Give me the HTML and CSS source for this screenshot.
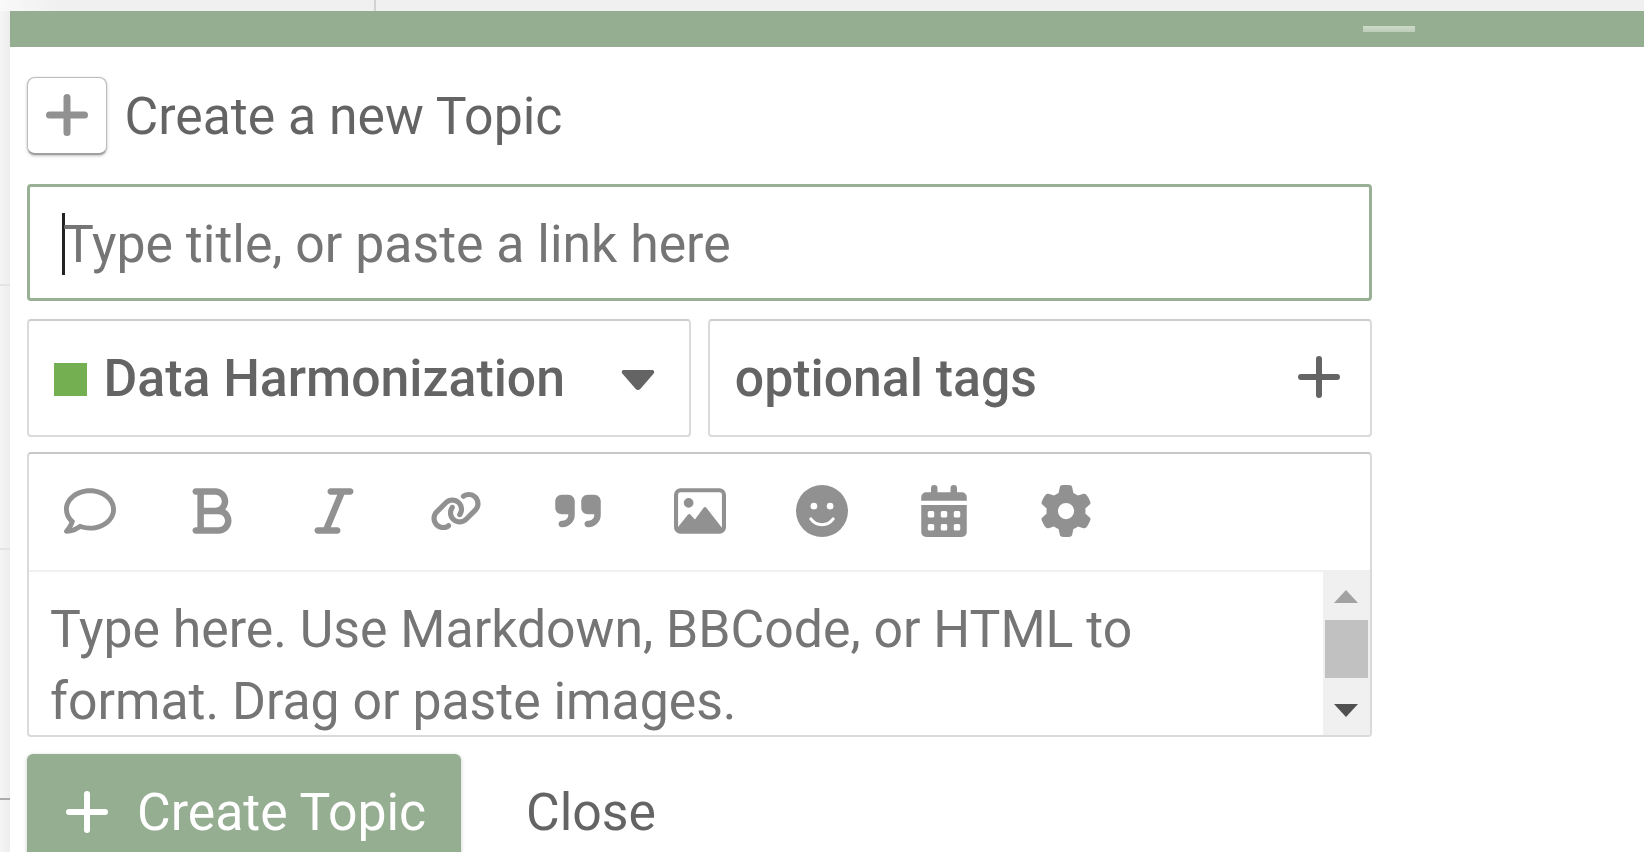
FILE: index.html
```html
<!DOCTYPE html>
<html lang="en">
<head>
<meta charset="utf-8">
<title>Create a new Topic</title>
<link rel="stylesheet" href="styles.css">
</head>
<body>
<div class="backdrop">
  <div class="page-top"></div>
  <div class="page-side"><i class="rule faint"></i><i class="rule faint"></i><i class="rule strong"></i></div>
  <main class="composer">
    <div class="grippie"><span class="grip"></span></div>
    <div class="content">
      <header class="action">
        <button class="action-button" aria-label="Topic actions"><svg class="plus" viewBox="0 0 42 42"><path d="M21 3.5v35M3.5 21h35"/></svg></button>
        <span class="action-title">Create a new Topic</span>
      </header>
      <div class="title-input"><span class="cursor"></span><span class="title-text">Type title, or paste a link here</span></div>
      <div class="selectors">
        <div class="select category"><span class="swatch"></span><span class="label">Data Harmonization</span><svg class="caret" viewBox="0 0 34 22"><path d="M3 1h28c2 0 3 2 1.500 3.700L19.500 19.700c-1.500 1.700-3.500 1.700-5 0L1.500 4.700C0 3 1 1 3 1z"/></svg></div>
        <div class="select tags"><span class="label">optional tags</span><svg class="plus slim" viewBox="0 0 42 42"><path d="M21 3v36M3 21h36"/></svg></div>
      </div>
      <section class="editor">
        <div class="toolbar">
          <svg class="icon" viewBox="0 0 512 512"><path d="M256 32C114.600 32 0 125.100 0 240c0 47.600 19.900 91.200 52.900 126.300C38 405.700 7 439.100 6.500 439.500c-6.600 7-8.400 17.200-4.600 26S14.400 480 24 480c61.500 0 110-25.700 139.100-46.300C192 442.800 223.200 448 256 448c141.400 0 256-93.100 256-208S397.400 32 256 32zm0 368c-26.700 0-53.100-4.100-78.400-12.100l-22.700-7.200-19.500 13.800c-14.300 10.100-33.900 21.400-57.500 29 7.300-12.100 14.400-25.700 19.900-40.200l10.600-28.100-20.600-21.800C69.700 314.100 48 282.200 48 240c0-88.200 93.300-160 208-160s208 71.800 208 160-93.300 160-208 160z"/></svg>
          <svg class="icon" viewBox="0 0 384 512"><path d="M0 64C0 46.300 14.300 32 32 32H80 96 224c70.700 0 128 57.300 128 128c0 31.300-11.300 60.100-30 82.300c37.100 22.400 62 63.100 62 109.700c0 70.700-57.300 128-128 128H96 80 32c-17.700 0-32-14.300-32-32s14.300-32 32-32H48V256 96H32C14.300 96 0 81.700 0 64zM224 224c35.300 0 64-28.700 64-64s-28.700-64-64-64H112V224H224zM112 288V416H256c35.300 0 64-28.700 64-64s-28.700-64-64-64H224 112z"/></svg>
          <svg class="icon" viewBox="0 0 384 512"><path d="M128 64c0-17.700 14.300-32 32-32H352c17.700 0 32 14.300 32 32s-14.300 32-32 32H293.300L160 416h64c17.700 0 32 14.300 32 32s-14.300 32-32 32H32c-17.700 0-32-14.300-32-32s14.300-32 32-32H90.700L224 96H160c-17.700 0-32-14.300-32-32z"/></svg>
          <svg class="icon" viewBox="0 0 640 512"><path d="M579.800 267.700c56.500-56.500 56.500-148 0-204.500c-50-50-128.800-56.500-186.300-15.400l-1.600 1.100c-14.400 10.300-17.700 30.300-7.400 44.600s30.300 17.700 44.600 7.400l1.600-1.100c32.100-22.900 76-19.300 103.800 8.600c31.500 31.500 31.500 82.500 0 114L422.300 334.800c-31.500 31.500-82.500 31.500-114 0c-27.900-27.900-31.500-71.800-8.600-103.800l1.100-1.600c10.300-14.400 6.900-34.400-7.400-44.600s-34.400-6.900-44.600 7.400l-1.100 1.600C206.500 251.200 213 330 263 380c56.500 56.500 148 56.500 204.500 0L579.800 267.700zM60.200 244.300c-56.500 56.500-56.500 148 0 204.500c50 50 128.800 56.500 186.300 15.400l1.600-1.100c14.400-10.300 17.700-30.300 7.400-44.600s-30.300-17.700-44.600-7.400l-1.600 1.100c-32.100 22.900-76 19.300-103.800-8.600C74 372 74 321 105.500 289.500L217.700 177.200c31.500-31.500 82.500-31.500 114 0c27.900 27.900 31.500 71.800 8.600 103.900l-1.100 1.600c-10.300 14.400-6.900 34.400 7.400 44.600s34.400 6.900 44.600-7.400l1.100-1.600C433.500 260.800 427 182 377 132c-56.500-56.500-148-56.500-204.500 0L60.200 244.300z"/></svg>
          <svg class="icon" viewBox="0 0 448 512"><path d="M448 296c0 66.300-53.700 120-120 120h-8c-17.700 0-32-14.300-32-32s14.300-32 32-32h8c30.900 0 56-25.100 56-56v-8H320c-35.300 0-64-28.700-64-64V160c0-35.300 28.700-64 64-64h64c35.300 0 64 28.700 64 64v136zm-256 0c0 66.300-53.700 120-120 120H64c-17.700 0-32-14.300-32-32s14.300-32 32-32h8c30.900 0 56-25.100 56-56v-8H64c-35.300 0-64-28.700-64-64V160c0-35.300 28.700-64 64-64h64c35.300 0 64 28.700 64 64v136z"/></svg>
          <svg class="icon" viewBox="0 0 512 512"><path fill-rule="evenodd" d="M64 32h384a64 64 0 0 1 64 64v320a64 64 0 0 1-64 64H64a64 64 0 0 1-64-64V96a64 64 0 0 1 64-64zm0 40a24 24 0 0 0-24 24v318L136 294c8-10 20-10 28 0l42 46 84-114c8-11 22-11 30 0l152 196V96a24 24 0 0 0-24-24zM144 128a48 48 0 1 1 0 96 48 48 0 0 1 0-96z"/></svg>
          <svg class="icon" viewBox="0 0 512 512"><circle cx="256" cy="256" r="256"/><circle class="cut" cx="176" cy="208" r="33"/><circle class="cut" cx="336" cy="208" r="33"/><path class="smile" d="M146 334c56 76 164 76 220 0"/></svg>
          <svg class="icon" viewBox="0 0 448 512"><path fill-rule="evenodd" d="M96 32a32 32 0 0 1 64 0v40h128V32a32 32 0 0 1 64 0v40h48a48 48 0 0 1 48 48v36H0v-36a48 48 0 0 1 48-48h48zM0 196h448v268a48 48 0 0 1-48 48H48a48 48 0 0 1-48-48zM80 256a16 16 0 0 0-16 16v32a16 16 0 0 0 16 16h32a16 16 0 0 0 16-16v-32a16 16 0 0 0-16-16zM208 256a16 16 0 0 0-16 16v32a16 16 0 0 0 16 16h32a16 16 0 0 0 16-16v-32a16 16 0 0 0-16-16zM336 256a16 16 0 0 0-16 16v32a16 16 0 0 0 16 16h32a16 16 0 0 0 16-16v-32a16 16 0 0 0-16-16zM80 384a16 16 0 0 0-16 16v32a16 16 0 0 0 16 16h32a16 16 0 0 0 16-16v-32a16 16 0 0 0-16-16zM208 384a16 16 0 0 0-16 16v32a16 16 0 0 0 16 16h32a16 16 0 0 0 16-16v-32a16 16 0 0 0-16-16zM336 384a16 16 0 0 0-16 16v32a16 16 0 0 0 16 16h32a16 16 0 0 0 16-16v-32a16 16 0 0 0-16-16z"/></svg>
          <svg class="icon" viewBox="0 0 512 512"><path d="M495.900 166.600c3.200 8.700 .5 18.400-6.400 24.600l-43.300 39.400c1.100 8.300 1.700 16.800 1.700 25.400s-.6 17.100-1.700 25.400l43.300 39.400c6.900 6.200 9.600 15.900 6.400 24.600c-4.400 11.900-9.700 23.300-15.800 34.300l-4.700 8.100c-6.600 11-14 21.400-22.100 31.200c-5.900 7.200-15.700 9.600-24.500 6.800l-55.700-17.700c-13.400 10.300-28.200 18.900-44 25.400l-12.500 57.100c-2 9.100-9 16.300-18.200 17.800c-13.800 2.300-28 3.500-42.500 3.500s-28.700-1.200-42.500-3.500c-9.200-1.500-16.200-8.700-18.200-17.800l-12.500-57.100c-15.800-6.500-30.600-15.100-44-25.400L83.100 425.900c-8.800 2.800-18.600 .3-24.500-6.800c-8.100-9.800-15.500-20.200-22.100-31.200l-4.700-8.100c-6.100-11-11.400-22.400-15.800-34.300c-3.200-8.700-.5-18.400 6.400-24.600l43.300-39.400C64.600 273.100 64 264.600 64 256s.6-17.100 1.700-25.400L22.400 191.200c-6.900-6.200-9.600-15.900-6.400-24.600c4.400-11.900 9.700-23.300 15.800-34.300l4.700-8.100c6.600-11 14-21.400 22.100-31.200c5.900-7.200 15.700-9.600 24.500-6.800l55.700 17.700c13.400-10.300 28.200-18.900 44-25.400l12.500-57.100c2-9.100 9-16.300 18.200-17.800C227.300 1.200 241.500 0 256 0s28.700 1.200 42.500 3.500c9.200 1.500 16.200 8.700 18.200 17.800l12.500 57.100c15.800 6.500 30.600 15.100 44 25.400l55.700-17.700c8.800-2.800 18.600-.3 24.500 6.800c8.100 9.800 15.500 20.200 22.100 31.200l4.700 8.100c6.100 11 11.400 22.400 15.800 34.300zM256 336a80 80 0 1 0 0-160 80 80 0 1 0 0 160z"/></svg>
        </div>
        <div class="textarea">
          <p class="placeholder">Type here. Use Markdown, BBCode, or HTML to<br>format. Drag or paste images.</p>
          <div class="scrollbar">
            <svg class="arrow up" viewBox="0 0 24 13"><path d="M0 13L12 0l12 13z"/></svg>
            <span class="thumb"></span>
            <svg class="arrow down" viewBox="0 0 24 13"><path d="M0 0h24L12 13z"/></svg>
          </div>
        </div>
      </section>
      <footer class="submit">
        <button class="create"><svg class="plus slim" viewBox="0 0 42 42"><path d="M21 3v36M3 21h36"/></svg><span class="label">Create Topic</span></button>
        <a class="close">Close</a>
      </footer>
    </div>
  </main>
</div>
</body>
</html>
```
FILE: styles.css
```css
* { box-sizing: border-box; }
body {
  margin: 0;
  overflow: hidden;
  font-family: Roboto, "Liberation Sans", sans-serif;
  font-size: 51.750px;
  line-height: 72px;
  color: #646464;
}
button { font: inherit; border: 0; padding: 0; }
.backdrop {
  display: grid;
  grid-template: 10.500px 1fr / 9.600px 1fr;
  width: 1644px;
  height: 852px;
  overflow: hidden;
  background: #f0f0f0;
}
.page-top {
  grid-column: 1 / 3;
  width: 376px;
  border-right: 2px solid #d2d2d2;
  background: linear-gradient(90deg, #f9f9f9, #f0f0f0 60px);
}
.page-side {
  display: flex;
  flex-direction: column;
  background: linear-gradient(90deg, #f5f5f5, #ededed);
}
.rule { height: 2px; flex: none; }
.faint { background: #e4e4e4; margin-top: 273px; }
.faint + .faint { margin-top: 262px; }
.strong { background: #aaa; margin-top: 248px; }
.composer { background: #fff; min-width: 0; }
.grippie {
  display: flex;
  height: 36px;
  padding: 15.500px 0 0 1353.500px;
  background: #95ad90;
}
.grip { width: 52px; height: 6px; flex: none; background: linear-gradient(#cddaca, #bdcdb9); }
.content { width: 1362px; padding: 30.500px 0 0 17.400px; }
.action { display: flex; align-items: center; height: 77px; gap: 17.500px; }
.action-button {
  display: grid;
  place-items: center;
  width: 80px;
  height: 78px;
  border: 1px solid #bcbcbc;
  border-bottom: 2px solid #a0a0a0;
  border-radius: 8px;
  background: #fff;
  color: #919191;
  box-shadow: 0 1px 3px rgba(0, 0, 0, .25);
}
.plus { width: 42px; height: 42px; fill: none; stroke: currentColor; stroke-width: 7; stroke-linecap: round; }
.slim { stroke-width: 6; }
.action-title { padding-top: 3px; }
.title-input {
  display: flex;
  align-items: center;
  height: 117px;
  margin-top: 30px;
  padding: 2px 0 0 32px;
  border: 3px solid #98b093;
  border-radius: 4px;
  color: #757575;
}
.cursor { width: 3px; height: 62px; background: #222; }
.title-text { margin-left: -2px; padding-top: 2px; }
.label { padding-top: 2px; }
.selectors { display: grid; grid-template-columns: 1fr 1fr; gap: 17px; margin-top: 17.500px; }
.select {
  display: flex;
  align-items: center;
  height: 118px;
  border: 2px solid #dadada;
  border-top-color: #ccc;
  border-radius: 4px;
  font-weight: 500;
}
.category { padding: 0 34px 0 25px; }
.swatch { width: 33px; height: 33px; margin: 3px 16.500px 0 0; background: #74b051; }
.caret { width: 34px; height: 22px; margin: 4px 0 0 auto; fill: currentColor; }
.tags { justify-content: space-between; padding: 0 30px 0 25px; }
.tags .plus { margin-top: -2px; }
.editor {
  height: 285px;
  margin-top: 15.200px;
  border: 2px solid #dadada;
  border-top-color: #c8c8c8;
  border-radius: 4px;
  display: flex;
  flex-direction: column;
}
.toolbar {
  display: flex;
  gap: 70px;
  padding: 31px 35px 0;
  height: 118px;
  flex: none;
  border-bottom: 2px solid #f0f0f0;
}
.icon { width: 52px; height: 52px; fill: #919191; flex: none; }
.icon .cut { fill: #fff; }
.icon .smile { fill: none; stroke: #fff; stroke-width: 30; stroke-linecap: round; }
.textarea { display: flex; justify-content: space-between; flex: 1; min-height: 0; }
.placeholder { margin: 0; padding: 22px 0 0 21px; color: #757575; white-space: nowrap; }
.scrollbar {
  display: flex;
  flex-direction: column;
  align-items: center;
  width: 47px;
  padding: 18px 0 18px;
  background: #f0f0f0;
}
.arrow { width: 24px; height: 13px; flex: none; }
.up { fill: #a2a2a2; }
.down { fill: #505050; margin-top: auto; }
.thumb { width: 43px; height: 58px; margin-top: 17px; background: #c1c1c1; }
.submit { display: flex; height: 99px; margin-top: 17.500px; }
.create {
  display: flex;
  align-items: center;
  width: 434px;
  height: 116px;
  padding-left: 39px;
  gap: 29px;
  border-radius: 6px;
  background: #95ad90;
  color: #fff;
  box-shadow: 0 1px 4px rgba(0, 0, 0, .2);
}
.close { padding: 23px 0 0 65px; }
```
